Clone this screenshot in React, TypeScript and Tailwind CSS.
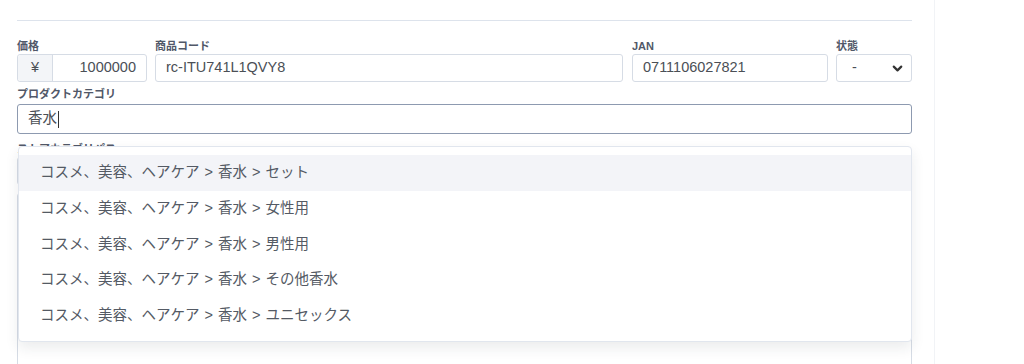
import React from 'react';
import { ChevronDown } from 'lucide-react';

const FONT = { fontFamily: '"Liberation Sans", "Noto Sans CJK JP", sans-serif' };

const suggestions = [
  ['コスメ、美容、ヘアケア', '香水', 'セット'],
  ['コスメ、美容、ヘアケア', '香水', '女性用'],
  ['コスメ、美容、ヘアケア', '香水', '男性用'],
  ['コスメ、美容、ヘアケア', '香水', 'その他香水'],
  ['コスメ、美容、ヘアケア', '香水', 'ユニセックス'],
];

const Label: React.FC<{ children: React.ReactNode }> = ({ children }) => (
  <div className="h-4 text-[11px] leading-4 font-bold text-[#515868]">{children}</div>
);

const App: React.FC = () => {
  return (
    <div className="w-[1024px] h-[364px] overflow-hidden bg-white flex text-[#4b4f56]" style={FONT}>
      {/* ===== form column ===== */}
      <div className="w-[935px] shrink-0 border-r border-[#f1f3f6] pl-[17px] pr-[22px]">
        <div className="mt-5 border-t border-[#dde3ec]" />

        {/* price / code / JAN / state */}
        <div className="mt-[17px] flex">
          <div className="w-[130px]">
            <Label>価格</Label>
            <div className="flex h-[28px] rounded-[3px] border border-[#d6dce5] text-[14.5px]">
              <span className="w-[35px] flex items-center justify-center bg-[#f3f5f8] border-r border-[#d6dce5] rounded-l-[3px]">¥</span>
              <span className="flex-1 flex items-center justify-end pr-[10px]">1000000</span>
            </div>
          </div>
          <div className="ml-2 flex-1">
            <Label>商品コード</Label>
            <div className="h-[28px] flex items-center pl-[10px] rounded-[3px] border border-[#d6dce5] text-[14.5px]">rc-ITU741L1QVY8</div>
          </div>
          <div className="ml-[9px] w-[196px]">
            <Label>JAN</Label>
            <div className="h-[28px] flex items-center pl-[10px] rounded-[3px] border border-[#d6dce5] text-[14.5px]">0711106027821</div>
          </div>
          <div className="ml-2 w-[76px]">
            <Label>状態</Label>
            <div className="h-[28px] flex items-center justify-between pl-[15px] pr-[6px] rounded-[3px] border border-[#d6dce5] text-[14.5px]">
              <span>-</span>
              <ChevronDown size={15} strokeWidth={3.5} className="text-[#333]" />
            </div>
          </div>
        </div>

        {/* product category with open suggestions */}
        <div className="mt-1 relative">
          <Label>プロダクトカテゴリ</Label>
          <div className="mt-[2px] h-[30px] flex items-center pl-[10px] rounded-[3px] border border-[#8d9ab0] text-[14.5px]">
            <span>香水</span>
            <span className="ml-px w-px h-[17px] bg-[#333]" />
          </div>

          <div className="mt-[7px]">
            <Label>ストアカテゴリパス</Label>
            <div className="h-[28px] rounded-[3px] border border-[#d6dce5]" />
            <div className="mt-2 h-[300px] rounded-[3px] border border-[#d6dce5]" />
          </div>

          <div className="absolute left-px right-0 top-[60px] z-10 pt-2 pb-[7px] bg-white rounded-[4px] border border-[#e1e6ee] shadow-[0_6px_14px_rgba(30,40,60,0.09)]">
            {suggestions.map((parts, i) => (
              <div
                key={parts.join('>')}
                className={`h-[35.8px] flex items-center pl-[21px] text-[14.5px] text-[#545a64] ${i === 0 ? 'bg-[#f3f4f8]' : ''}`}
              >
                {parts.map((p, j) => (
                  <React.Fragment key={p}>
                    {j > 0 && <span className="mx-[5px]">&gt;</span>}
                    <span>{p}</span>
                  </React.Fragment>
                ))}
              </div>
            ))}
          </div>
        </div>
      </div>

      {/* ===== right gutter ===== */}
      <div className="flex-1 bg-white" />
    </div>
  );
};

export default App;
